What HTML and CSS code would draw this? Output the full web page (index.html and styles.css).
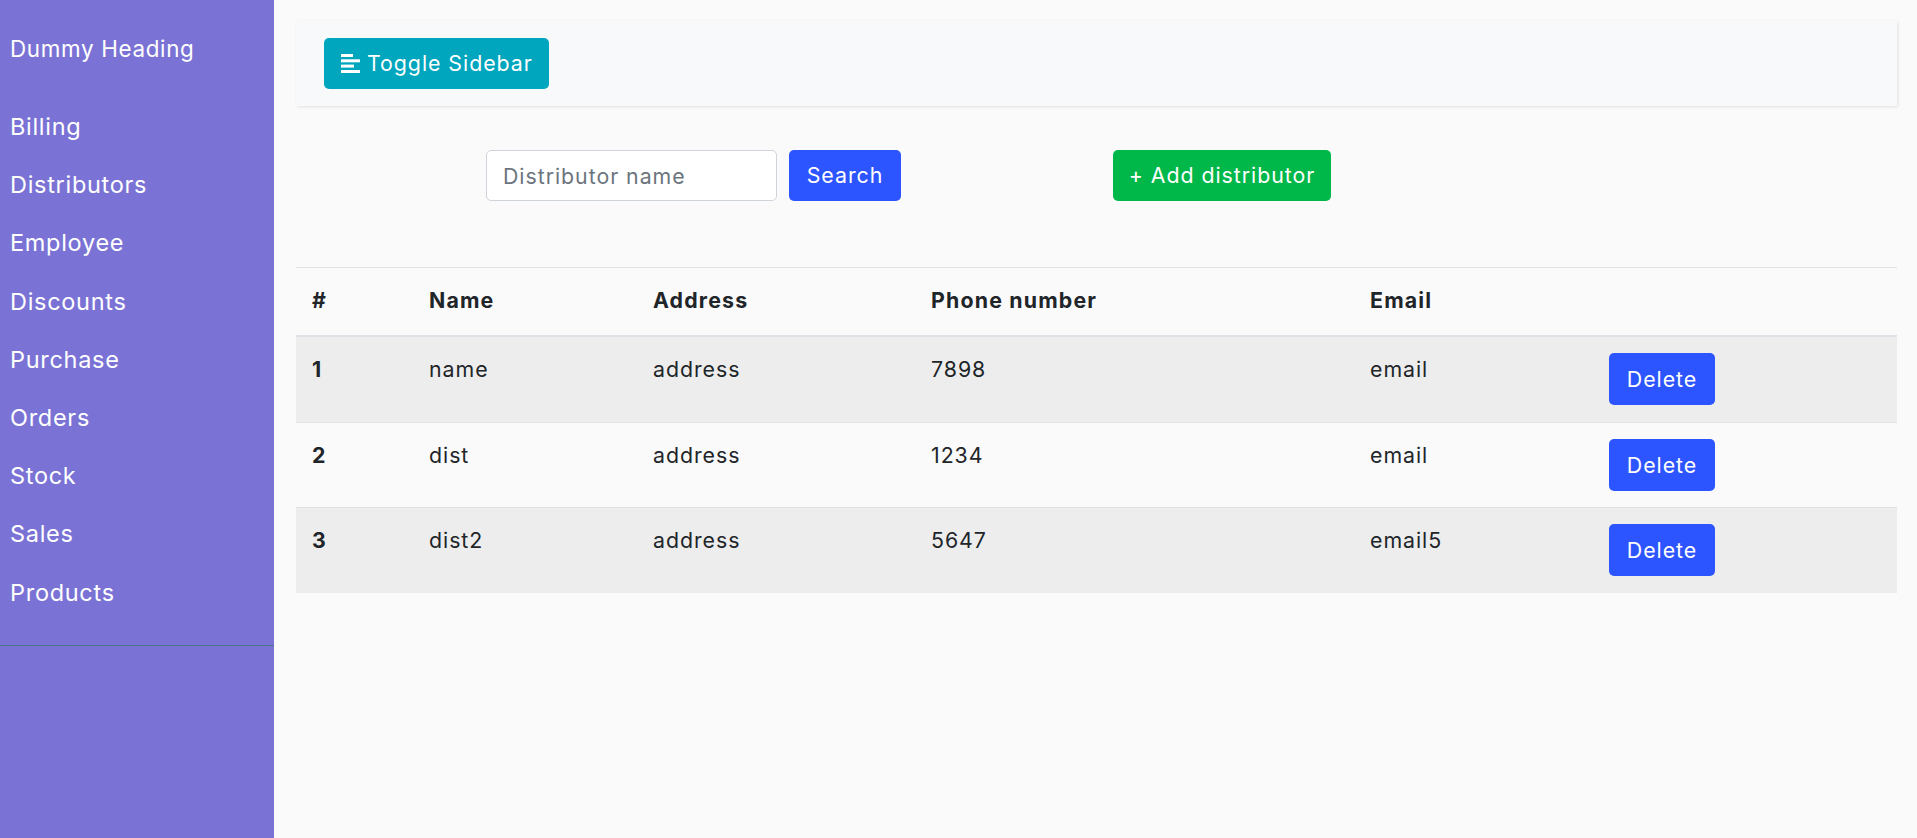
FILE: index.html
```html
<!DOCTYPE html>
<html lang="en">
<head>
<meta charset="utf-8">
<title>Distributors</title>
<link rel="stylesheet" href="styles.css">
</head>
<body>
<div class="wrapper">
  <nav class="sidebar">
    <div class="sidebar-header">Dummy Heading</div>
    <ul class="menu">
      <li><a href="#">Billing</a></li>
      <li><a href="#">Distributors</a></li>
      <li><a href="#">Employee</a></li>
      <li><a href="#">Discounts</a></li>
      <li><a href="#">Purchase</a></li>
      <li><a href="#">Orders</a></li>
      <li><a href="#">Stock</a></li>
      <li><a href="#">Sales</a></li>
      <li><a href="#">Products</a></li>
    </ul>
  </nav>
  <main class="content">
    <div class="topbar">
      <button class="btn btn-info" type="button">
        <svg class="icon" viewBox="0 0 19 19" width="19" height="19" aria-hidden="true">
          <rect x="0" y="0" width="12" height="3" fill="#fff"/>
          <rect x="0" y="5.3" width="19" height="3" fill="#fff"/>
          <rect x="0" y="10.6" width="13" height="3" fill="#fff"/>
          <rect x="0" y="16" width="19" height="3" fill="#fff"/>
        </svg>
        <span>Toggle Sidebar</span>
      </button>
    </div>
    <div class="search-row">
      <input class="search-input" type="text" placeholder="Distributor name">
      <button class="btn btn-primary btn-search" type="button">Search</button>
      <button class="btn btn-success btn-add" type="button">+ Add distributor</button>
    </div>
    <table class="table">
      <colgroup>
        <col class="c1"><col class="c2"><col class="c3"><col class="c4"><col class="c5"><col class="c6">
      </colgroup>
      <thead>
        <tr><th>#</th><th>Name</th><th>Address</th><th>Phone number</th><th>Email</th><th></th></tr>
      </thead>
      <tbody>
        <tr class="odd"><th>1</th><td>name</td><td>address</td><td>7898</td><td>email</td><td><button class="btn btn-primary btn-del" type="button">Delete</button></td></tr>
        <tr><th>2</th><td>dist</td><td>address</td><td>1234</td><td>email</td><td><button class="btn btn-primary btn-del" type="button">Delete</button></td></tr>
        <tr class="odd"><th>3</th><td>dist2</td><td>address</td><td>5647</td><td>email5</td><td><button class="btn btn-primary btn-del" type="button">Delete</button></td></tr>
      </tbody>
    </table>
  </main>
</div>
</body>
</html>
```
FILE: styles.css
```css
html, body {
  margin: 0;
  padding: 0;
  background: #fafafa;
  font-family: "Inter", "Noto Sans", sans-serif;
  color: #212529;
}

.wrapper {
  display: flex;
  min-height: 100vh;
}

.sidebar {
  flex: none;
  width: 274px;
  min-height: 100vh;
  background: #7a73d5;
  color: #fff;
}

.sidebar-header {
  box-sizing: border-box;
  height: 70px;
  padding: 30px 11px 0 10px;
  font-size: 22.4px;
  line-height: 38px;
  letter-spacing: 0.03em;
}

.menu {
  list-style: none;
  margin: 0;
  padding: 27px 0 24px;
  border-bottom: 1px solid #47748b;
}

.menu a {
  display: block;
  padding: 14px 11px 12px 10px;
  font-size: 23.5px;
  line-height: 32.2px;
  letter-spacing: 0.03em;
  color: #fff;
  text-decoration: none;
}

.content {
  flex: 1;
  min-width: 0;
  padding: 21px 20px 0 22px;
}

.topbar {
  box-sizing: border-box;
  height: 85px;
  padding: 17px 28px;
  background: #f8f9fa;
  box-shadow: 1px 1px 3px rgba(0, 0, 0, 0.1);
}

.btn {
  box-sizing: border-box;
  height: 51px;
  border: none;
  border-radius: 5px;
  color: #fff;
  font-family: inherit;
  font-size: 21.33px;
  letter-spacing: 0.045em;
  line-height: 51px;
  padding: 0;
  cursor: pointer;
}

.btn-info {
  display: inline-flex;
  align-items: center;
  gap: 7px;
  width: 225px;
  padding: 0 0 0 17px;
  background: #00a6bd;
}

.icon {
  flex: none;
  display: block;
}

.search-row {
  display: flex;
  align-items: center;
  margin-top: 44px;
  padding-left: 190px;
  height: 51px;
}

.search-input {
  box-sizing: border-box;
  width: 291px;
  height: 51px;
  border: 1px solid #ced4da;
  border-radius: 5px;
  background: #fff;
  padding: 0 16px;
  font-family: inherit;
  font-size: 21.33px;
  letter-spacing: 0.045em;
  color: #495057;
}

.search-input::placeholder {
  color: #6c757d;
}

.btn-primary {
  background: #2d55ff;
}

.btn-search {
  width: 112px;
  margin-left: 12px;
}

.btn-success {
  background: #00b74a;
}

.btn-add {
  width: 218px;
  margin-left: 212px;
}

.table {
  width: 100%;
  margin-top: 66px;
  border-collapse: collapse;
  table-layout: fixed;
}

.c1 { width: 117px; }
.c2 { width: 224px; }
.c3 { width: 278px; }
.c4 { width: 439px; }
.c5 { width: 239px; }
.c6 { width: auto; }

.table th,
.table td {
  padding: 16px 16px 16.5px;
  text-align: left;
  vertical-align: top;
  font-size: 21.33px;
  letter-spacing: 0.045em;
  line-height: 32px;
  border-top: 1px solid #dee2e6;
}

.table th {
  font-weight: 700;
  letter-spacing: 0.055em;
}

.table td {
  font-weight: 400;
}

.table thead th {
  padding: 16px 16px 19px;
  border-bottom: 2px solid #dee2e6;
}

.table tbody tr.odd {
  background: #ededed;
}

.btn-del {
  display: block;
  width: 106px;
  height: 52px;
  line-height: 52px;
}
```
